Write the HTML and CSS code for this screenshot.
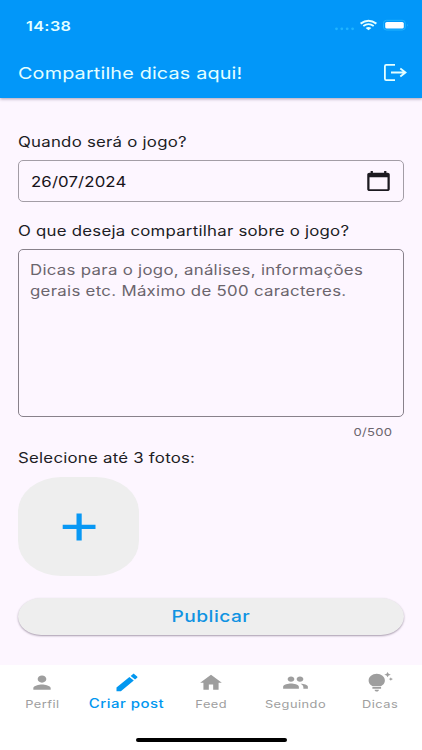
FILE: index.html
```html
<!DOCTYPE html>
<html lang="pt-BR">
<head>
<meta charset="utf-8">
<meta name="viewport" content="width=device-width, initial-scale=1">
<title>Compartilhe dicas</title>
<link rel="stylesheet" href="styles.css">
</head>
<body>
<div class="app">
  <header class="top">
    <div class="status">
      <span class="wide time">14:38</span>
      <svg class="status-icons" width="76" height="14" viewBox="0 0 76 14">
        <g fill="#20b4ff"><circle cx="3.5" cy="9.8" r="1.4"/><circle cx="8.8" cy="9.8" r="1.4"/><circle cx="14.2" cy="9.8" r="1.4"/><circle cx="19.6" cy="9.8" r="1.4"/></g>
        <g fill="none" stroke="#e4ffff" stroke-width="1.9"><path d="M27.6 4.6Q35.5-1 43.4 4.6"/><path d="M30.3 7Q35.5 3.3 40.7 7"/></g>
        <path d="M32.600 8.900Q35.500 6.900 38.400 8.900L35.500 11.200Z" fill="#e4ffff"/>
        <rect x="50.500" y="1.300" width="21.800" height="9.700" rx="3" fill="none" stroke="#20b4ff"/>
        <rect x="52.200" y="2.900" width="18.600" height="6.600" rx="1.600" fill="#fff"/>
        <path d="M74 4.700Q75.600 6.100 74 7.500Z" fill="#20b4ff"/>
      </svg>
    </div>
    <div class="bar">
      <h1 class="wide title">Compartilhe dicas aqui!</h1>
      <svg class="logout" width="24" height="19" viewBox="0 0 24 19" fill="none" stroke="#e4ffff" stroke-width="1.800"><path d="M12 1.900H3.200Q1.900 1.900 1.900 3.200V15.800Q1.900 17.100 3.200 17.100H12M8 9.500H22.500M17.300 5.500L22.500 9.500L17.300 13.500"/></svg>
    </div>
  </header>
  <main class="form">
    <label class="label first"><span class="wide">Quando será o jogo?</span></label>
    <div class="field date">
      <span class="wide date-text">26/07/2024</span>
      <svg width="27" height="22" viewBox="0 0 24 24" preserveAspectRatio="none" fill="#1c1a20"><path d="M20 3h-1V1h-2v2H7V1H5v2H4c-1.100 0-2 .9-2 2v16c0 1.100.9 2 2 2h16c1.100 0 2-.9 2-2V5c0-1.100-.9-2-2-2zm0 18H4V8h16v13z"/></svg>
    </div>
    <label class="label second"><span class="wide">O que deseja compartilhar sobre o jogo?</span></label>
    <div class="field area">
      <div><span class="wide">Dicas para o jogo, análises, informações</span></div>
      <div><span class="wide">gerais etc. Máximo de 500 caracteres.</span></div>
    </div>
    <div class="counter"><span class="wide count">0/500</span></div>
    <div class="label third"><span class="wide">Selecione até 3 fotos:</span></div>
    <div class="photo">
      <svg width="34" height="28" viewBox="0 0 34 28" fill="#0898f4"><path d="M14.500.500h5.200v11.300H33.500v4.200H19.700v11.500h-5.200V16H.7v-4.200h13.800z"/></svg>
    </div>
    <div class="publish"><span class="wide pub">Publicar</span></div>
  </main>
  <nav class="nav">
    <div class="tab">
      <svg width="26" height="21.300" viewBox="0 0 24 24" preserveAspectRatio="none"><path d="M12 12c2.210 0 4-1.790 4-4s-1.790-4-4-4-4 1.790-4 4 1.790 4 4 4zm0 2c-2.670 0-8 1.340-8 4v2h16v-2c0-2.660-5.330-4-8-4z"/></svg>
      <span class="wide">Perfil</span>
    </div>
    <div class="tab active">
      <svg width="28" height="23" viewBox="0 0 24 24" preserveAspectRatio="none"><path d="M3 17.250V21h3.750L17.810 9.940l-3.750-3.750L3 17.250zM20.710 7.040c.39-.39.39-1.020 0-1.410l-2.340-2.340c-.39-.39-1.020-.39-1.410 0l-1.830 1.830 3.750 3.750 1.830-1.830z"/></svg>
      <span class="wide">Criar post</span>
    </div>
    <div class="tab">
      <svg width="26" height="21.300" viewBox="0 0 24 24" preserveAspectRatio="none"><path d="M10 20v-6h4v6h5v-8h3L12 3 2 12h3v8z"/></svg>
      <span class="wide">Feed</span>
    </div>
    <div class="tab">
      <svg width="27" height="21.300" viewBox="0 0 24 24" preserveAspectRatio="none"><path d="M16.500 13.130C18 14 19 15.300 19 17.500v1.500h4v-2.500c0-2.200-3.600-3.200-6.500-3.370zM16 11c1.660 0 2.990-1.340 2.990-3S17.660 5 16 5s-3 1.340-3 3 1.340 3 3 3zM8 11c1.660 0 2.990-1.340 2.990-3S9.660 5 8 5 5 6.340 5 8s1.340 3 3 3zm0 2c-2.330 0-7 1.170-7 3.500V19h14v-2.500c0-2.330-4.670-3.500-7-3.500z"/></svg>
      <span class="wide">Seguindo</span>
    </div>
    <div class="tab">
      <svg width="26" height="21.300" viewBox="0 0 24 24" preserveAspectRatio="none"><path d="M7 20h4c0 1.100-.9 2-2 2s-2-.9-2-2zm-2-1h8v-2H5v2zm11.500-9.500c0 3.820-2.660 5.860-3.770 6.500H5.270C4.160 15.360 1.500 13.320 1.500 9.500 1.500 5.360 4.860 2 9 2s7.500 3.360 7.500 7.500zm4.870-2.130L20 8l1.370.63L22 10l.63-1.370L24 8l-1.370-.63L22 6l-.63 1.370zM19 6l.94-2.060L22 3l-2.060-.94L19 0l-.94 2.060L16 3l2.060.94L19 6z"/></svg>
      <span class="wide">Dicas</span>
    </div>
  </nav>
  <footer class="home"><div class="pill"></div></footer>
</div>
</body>
</html>
```
FILE: styles.css
```css
* { box-sizing: border-box; }
body { margin: 0; background: #fdf6ff; font-family: Inter, "Liberation Sans", sans-serif; }
.app { width: 422px; height: 750px; display: flex; flex-direction: column; overflow: hidden; }
.wide { display: inline-block; white-space: nowrap; transform: scaleX(1.2); transform-origin: left center; }

.top { height: 98px; flex: none; background: #0297f9; color: #e4ffff; box-shadow: 0 1px 3px rgba(40, 20, 60, .4); }
.status { height: 50px; display: flex; justify-content: space-between; align-items: center; padding: 1px 13px 0 26px; }
.time { font-size: 13.500px; font-weight: 600; letter-spacing: .3px; }
.bar { height: 45px; display: flex; justify-content: space-between; align-items: center; padding: 0 15px 0 18px; }
.title { margin: 0; font-size: 16.500px; font-weight: 400; letter-spacing: .13px; }

.form { flex: 1; padding: 33px 18px 0; display: flex; flex-direction: column; color: #201c24; font-size: 14px; letter-spacing: .2px; }
.label { height: 20px; line-height: 20px; }
.first { height: 21px; line-height: 22px; }
.field { border: 1px solid #a39da6; border-radius: 5px; }
.date { height: 42px; margin-top: 8px; padding: 0 11px 0 12px; display: flex; align-items: center; justify-content: space-between; color: #17131a; }
.date-text { letter-spacing: .1px; }
.second { margin-top: 19px; }
.area { height: 168px; margin-top: 8px; padding: 9px 11px; line-height: 21.300px; letter-spacing: .25px; color: #6b656d; border-color: #88818b; }
.counter { height: 20px; line-height: 22px; margin-top: 4px; padding-right: 11.500px; display: flex; justify-content: flex-end; font-size: 10.900px; color: #6b656d; }
.count { transform-origin: right center; }
.third { margin-top: 7px; }
.photo { width: 121px; height: 99px; margin-top: 9px; border-radius: 43px / 35px; background: #eeeeee; display: flex; align-items: center; justify-content: center; }
.publish { height: 37px; margin-top: 22px; padding-bottom: 1px; border-radius: 23px / 18.500px; background: #eeeeee; display: flex; align-items: center; justify-content: center; box-shadow: 0 1px 2px rgba(40, 20, 50, .4); color: #1093e2; font-size: 16px; font-weight: 500; letter-spacing: .4px; }
.pub { transform-origin: center; }

.nav { height: 61px; flex: none; background: #fff; display: grid; grid-template-columns: repeat(5, 1fr); }
.tab { display: flex; flex-direction: column; align-items: center; padding-top: 7px; color: #9e9e9e; fill: #9e9e9e; font-size: 10.700px; line-height: 14px; letter-spacing: .4px; }
.tab svg { flex: none; }
.tab .wide { transform-origin: center; margin-top: 5px; }
.tab.active { padding-top: 6px; color: #0297f0; fill: #0297f0; font-size: 12.500px; font-weight: 500; }
.active .wide { margin-top: 2px; }
.tab.active .wide { margin-top: 3px; }
.home { height: 24px; flex: none; background: #fff; display: flex; justify-content: center; align-items: center; padding-top: 4px; }
.pill { width: 151px; height: 4.500px; border-radius: 3px; background: #000; }
```
